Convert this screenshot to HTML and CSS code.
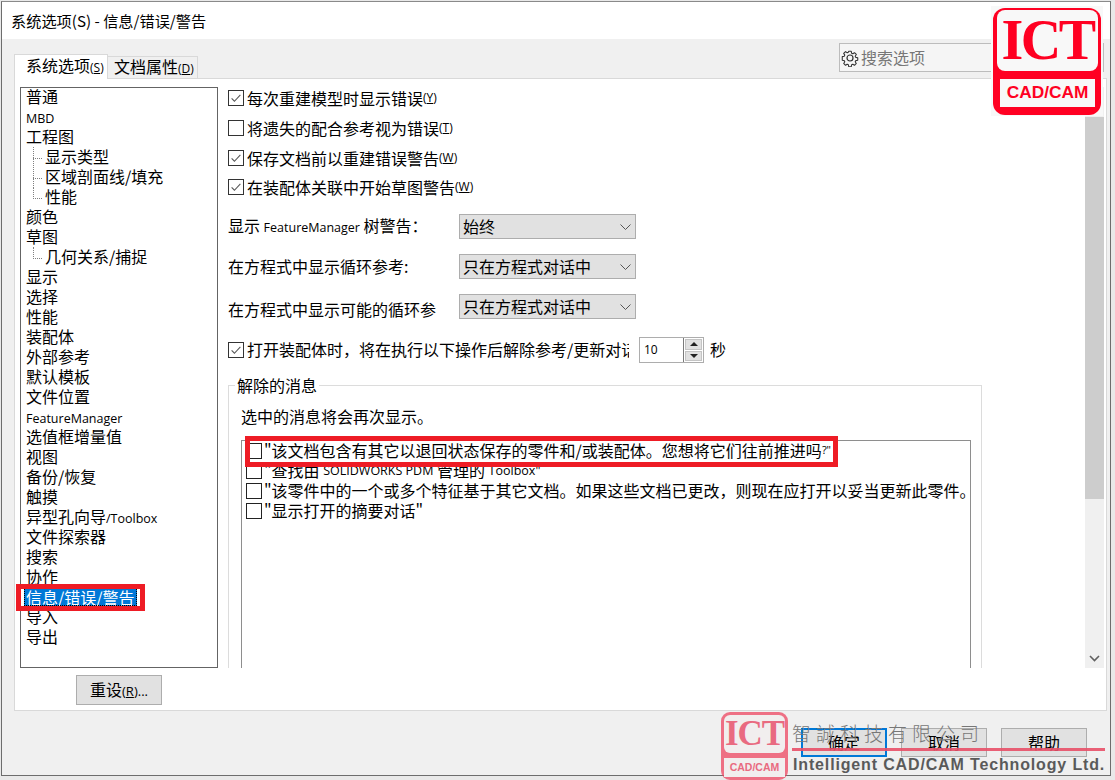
FILE: index.html
```html
<!DOCTYPE html>
<html lang="zh">
<head>
<meta charset="utf-8">
<title>系统选项</title>
<link rel="stylesheet" href="styles.css">
</head>
<body>
<div class="window">
  <div class="titlebar">系统选项(S) - 信息/错误/警告</div>
  <div class="client">
    <div class="tabstrip">
      <div class="tabs">
        <div class="tab active">系统选项<span class="acc">(<u>S</u>)</span></div>
        <div class="tab">文档属性<span class="acc">(<u>D</u>)</span></div>
      </div>
      <div class="search">
        <svg class="gear" width="18" height="18" viewBox="0 0 18 18"><path d="M7.6 1.5h2.8l.4 2.2 1.3.6 1.9-1.2 2 2-1.2 1.9.6 1.3 2.2.4v2.8l-2.2.4-.6 1.3 1.2 1.9-2 2-1.9-1.2-1.3.6-.4 2.2H7.6l-.4-2.2-1.3-.6-1.9 1.2-2-2 1.2-1.9-.6-1.3-2.2-.4V7.5l2.2-.4.6-1.3-1.2-1.9 2-2 1.9 1.2 1.3-.6z" transform="translate(.9 .9) scale(.9)" fill="none" stroke="#333" stroke-width="1.2" stroke-linejoin="round"/><circle cx="9" cy="9" r="3" fill="none" stroke="#333" stroke-width="1.2"/></svg>
        <span class="search-text">搜索选项</span>
      </div>
    </div>
    <div class="panel">
      <div class="panel-main">
        <div class="side">
          <ul class="tree">
            <li>普通</li>
            <li class="latin">MBD</li>
            <li>工程图</li>
            <li class="sub">显示类型</li>
            <li class="sub">区域剖面线/填充</li>
            <li class="sub last">性能</li>
            <li>颜色</li>
            <li>草图</li>
            <li class="sub last">几何关系/捕捉</li>
            <li>显示</li>
            <li>选择</li>
            <li>性能</li>
            <li>装配体</li>
            <li>外部参考</li>
            <li>默认模板</li>
            <li>文件位置</li>
            <li class="latin">FeatureManager</li>
            <li>选值框增量值</li>
            <li>视图</li>
            <li>备份/恢复</li>
            <li>触摸</li>
            <li>异型孔向导<span class="latin-in">/Toolbox</span></li>
            <li>文件探索器</li>
            <li>搜索</li>
            <li>协作</li>
            <li><span class="selected">信息/错误/警告</span></li>
            <li>导入</li>
            <li>导出</li>
          </ul>
          <div class="reset-wrap"><div class="btn reset">重设<span class="acc wide">(<u>R</u>)...</span></div></div>
        </div>
        <div class="pane">
          <div class="pane-content">
            <div class="checks">
              <div class="check-row"><span class="cb on"><svg viewBox="0 0 16 16"><path d="M3 8.5l3.2 3.2L13 4.5" fill="none" stroke="#555" stroke-width="1.2"/></svg></span>每次重建模型时显示错误<span class="acc">(<u>Y</u>)</span></div>
              <div class="check-row"><span class="cb"></span>将遗失的配合参考视为错误<span class="acc">(<u>T</u>)</span></div>
              <div class="check-row"><span class="cb on"><svg viewBox="0 0 16 16"><path d="M3 8.5l3.2 3.2L13 4.5" fill="none" stroke="#555" stroke-width="1.2"/></svg></span>保存文档前以重建错误警告<span class="acc">(<u>W</u>)</span></div>
              <div class="check-row"><span class="cb on"><svg viewBox="0 0 16 16"><path d="M3 8.5l3.2 3.2L13 4.5" fill="none" stroke="#555" stroke-width="1.2"/></svg></span>在装配体关联中开始草图警告<span class="acc">(<u>W</u>)</span></div>
            </div>
            <div class="selects">
              <div class="select-row"><span class="sel-label first">显示 <span class="latin-in">FeatureManager</span> 树警告：</span><div class="select">始终<svg class="chev" width="11" height="6" viewBox="0 0 11 6"><path d="M.5.5l5 5 5-5" fill="none" stroke="#555"/></svg></div></div>
              <div class="select-row"><span class="sel-label">在方程式中显示循环参考:</span><div class="select">只在方程式对话中<svg class="chev" width="11" height="6" viewBox="0 0 11 6"><path d="M.5.5l5 5 5-5" fill="none" stroke="#555"/></svg></div></div>
              <div class="select-row"><span class="sel-label low">在方程式中显示可能的循环参</span><div class="select">只在方程式对话中<svg class="chev" width="11" height="6" viewBox="0 0 11 6"><path d="M.5.5l5 5 5-5" fill="none" stroke="#555"/></svg></div></div>
            </div>
            <div class="spin-row">
              <span class="cb on"><svg viewBox="0 0 16 16"><path d="M3 8.5l3.2 3.2L13 4.5" fill="none" stroke="#555" stroke-width="1.2"/></svg></span>
              <span class="spin-label">打开装配体时，将在执行以下操作后解除参考/更新对话框</span>
              <div class="spin"><span class="spin-val">10</span><div class="spin-btns"><span class="spin-btn"><i class="up"></i></span><span class="spin-btn"><i class="down"></i></span></div></div>
              <span class="sec">秒</span>
            </div>
            <div class="group">
              <div class="legend">解除的消息</div>
              <div class="hint">选中的消息将会再次显示。</div>
              <div class="listbox">
                <div class="msg"><span class="cb"></span>"该文档包含有其它以退回状态保存的零件和/或装配体。您想将它们往前推进吗<span class="small">?"</span></div>
                <div class="msg"><span class="cb"></span>"查找由 <span class="latin-in">SOLIDWORKS PDM</span> 管理的 <span class="latin-in">Toolbox"</span></div>
                <div class="msg"><span class="cb"></span>"该零件中的一个或多个特征基于其它文档。如果这些文档已更改，则现在应打开以妥当更新此零件。</div>
                <div class="msg"><span class="cb"></span>"显示打开的摘要对话"</div>
              </div>
            </div>
          </div>
          <div class="scrollbar">
            <div class="sb-up"></div>
            <div class="sb-thumb"></div>
            <div class="sb-track"></div>
            <div class="sb-down"><svg width="11" height="7" viewBox="0 0 11 7"><path d="M1 1l4.5 4.5L10 1" fill="none" stroke="#606060" stroke-width="1.6"/></svg></div>
          </div>
        </div>
      </div>
    </div>
    <div class="footer">
      <div class="btn default">确定</div>
      <div class="btn">取消</div>
      <div class="btn">帮助</div>
    </div>
  </div>
</div>

<div class="hl hl-tree"></div>
<div class="hl hl-msg"></div>

<div class="logo">
  <div class="logo-inner">
    <div class="logo-top">ICT</div>
    <div class="logo-bottom">CAD/CAM</div>
  </div>
</div>

<div class="mark">
  <div class="mark-logo">
    <div class="mark-top">ICT</div>
    <div class="mark-bottom">CAD/CAM</div>
  </div>
  <div class="mark-text">
    <div class="mark-cn">智誠科技有限公司</div>
    <div class="mark-en">Intelligent CAD/CAM Technology Ltd.</div>
  </div>
</div>
</body>
</html>
```

FILE: styles.css
```css
* { box-sizing: border-box; }
html, body { margin: 0; height: 100%; }
body {
  position: relative;
  width: 1115px;
  height: 780px;
  overflow: hidden;
  background: #e9e9e9;
  color: #000;
  font: 16px/20px "Noto Sans CJK SC", "Open Sans", sans-serif;
}
.window {
  margin: 1px 0 0 1px;
  width: 1110px;
  height: 775px;
  border: 1px solid #6d6d6d;
  border-top-color: #8a8a8a;
  background: #f0f0f0;
  display: flex;
  flex-direction: column;
}
.titlebar {
  height: 37px;
  flex: none;
  background: #fff;
  padding: 8px 0 0 9px;
  font-size: 15.2px;
  line-height: 20px;
}
.client { flex: 1; display: flex; flex-direction: column; padding: 0 3px 0 12px; min-height: 0; }
.tabstrip { height: 39px; flex: none; display: flex; justify-content: space-between; position: relative; }
.tabs { display: flex; align-items: flex-end; padding-top: 15px; height: 40px; position: relative; z-index: 1; }
.tab {
  height: 22px;
  width: 90px;
  padding: 0 0 0 6px;
  margin-bottom: 1px;
  background: #f0f0f0;
  border: 1px solid #d9d9d9;
  border-left: 0;
  border-bottom: 0;
  line-height: 19px;
  white-space: nowrap;
}
.tab.active {
  width: 94px;
  height: 25px;
  margin-bottom: 0;
  padding-left: 11px;
  background: #fff;
  border-left: 1px solid #d9d9d9;
  line-height: 20px;
}
.acc { font: 12px/1 "Open Sans", sans-serif; }
.acc.wide { font-size: 13px; }
.search {
  position: relative;
  top: 4px;
  width: 265px;
  height: 29px;
  margin-right: 3px;
  background: #f5f5f5;
  border: 1px solid #bcbcbc;
  display: flex;
  align-items: center;
  padding-left: 1px;
  gap: 2px;
  color: #777;
}
.search-text { padding-bottom: 2px; }
.gear { flex: none; }
.panel {
  height: 633px;
  flex: none;
  background: #fff;
  border: 1px solid #d9d9d9;
  padding: 8px 2px 0 5px;
}
.panel-main { display: flex; gap: 10px; height: 622px; }
.side { width: 198px; flex: none; display: flex; flex-direction: column; }
.tree {
  list-style: none;
  margin: 0;
  padding: 0 0 0 5px;
  height: 581px;
  flex: none;
  border: 1px solid #646464;
}
.tree li { height: 20px; line-height: 16px; white-space: nowrap; position: relative; }
.tree li.latin { font: 12.5px/21px "Open Sans", sans-serif; }
.latin-in { font: 12.5px/1 "Open Sans", sans-serif; }
.tree li.sub { padding-left: 19px; }
.tree li.sub::before {
  content: "";
  position: absolute;
  left: 7px;
  top: -1px;
  height: 21px;
  border-left: 1px dotted #808080;
}
.tree li.sub.last::before { height: 12px; }
.tree li.sub::after {
  content: "";
  position: absolute;
  left: 7px;
  top: 10px;
  width: 9px;
  border-top: 1px dotted #808080;
}
.selected {
  display: block;
  width: fit-content;
  margin-left: -2px;
  padding: 0 2px;
  line-height: 18px;
  background: #0078d7;
  color: #fff;
  outline: 1px dotted #000;
  outline-offset: -1px;
}
.reset-wrap { flex: 1; padding: 7px 0 0 56px; }
.btn {
  width: 86px;
  height: 29px;
  background: #e1e1e1;
  border: 1px solid #adadad;
  text-align: center;
  line-height: 27px;
  white-space: nowrap;
}
.reset { height: 30px; line-height: 26px; }
.pane { flex: 1; display: flex; height: 581px; min-width: 0; }
.pane-content { flex: 1; min-width: 0; overflow: hidden; display: flex; flex-direction: column; }
.checks { display: flex; flex-direction: column; padding-top: 1px; gap: 10px; height: 127px; flex: none; }
.check-row { height: 20px; display: flex; align-items: center; white-space: nowrap; }
.check-row:nth-child(4) { margin-top: -1px; }
.cb {
  width: 16px;
  height: 16px;
  flex: none;
  display: inline-block;
  background: #fff;
  border: 1px solid #333;
  margin-right: 3px;
}
.cb svg { display: block; width: 14px; height: 14px; }
.selects { display: flex; flex-direction: column; gap: 15px; flex: none; }
.select-row { display: flex; height: 25px; align-items: center; }
.sel-label { width: 231px; flex: none; white-space: nowrap; padding-bottom: 2px; }
.sel-label.first { padding-bottom: 4px; }
.sel-label.low { padding: 4px 0 0; }
.select {
  width: 177px;
  height: 25px;
  background: #e1e1e1;
  border: 1px solid #adadad;
  padding: 0 0 2px 3px;
  line-height: 20px;
  display: flex;
  align-items: center;
  justify-content: space-between;
}
.chev { margin: 2px 4px 0 0; }
.spin-row { display: flex; align-items: center; height: 26px; margin-top: 18px; flex: none; }
.spin-label { width: 382px; flex: none; overflow: hidden; white-space: nowrap; margin-right: 10px; padding-bottom: 2px; }
.spin {
  width: 65px;
  height: 26px;
  border: 1px solid #adadad;
  display: flex;
  align-items: stretch;
  flex: none;
  outline: 0;
}
.spin-val { flex: 1; padding-left: 4px; font: 12px/24px "Open Sans", sans-serif; border: 1px solid #333; border-right-color: #7a7a7a; border-width: 0 1px 0 0; }
.spin-btns { width: 19px; display: flex; flex-direction: column; gap: 1px; padding: 1px; }
.spin-btn { flex: 1; background: #e1e1e1; border: 1px solid #c4c4c4; display: flex; align-items: center; justify-content: center; }
.spin-btn i { width: 0; height: 0; border-left: 4px solid transparent; border-right: 4px solid transparent; }
.spin-btn .up { border-bottom: 4px solid #222; }
.spin-btn .down { border-top: 4px solid #222; }
.sec { margin-left: 6px; padding-bottom: 3px; }
.group {
  position: relative;
  width: 754px;
  flex: 1;
  margin-top: 22px;
  border: 1px solid #dcdcdc;
  border-bottom: 0;
  padding: 21px 10px 0 12px;
  min-height: 0;
  display: flex;
  flex-direction: column;
}
.legend {
  position: absolute;
  left: 6px;
  top: -11px;
  background: #fff;
  padding: 0 2px;
  line-height: 20px;
}
.hint { height: 20px; line-height: 18px; flex: none; }
.listbox {
  margin-top: 13px;
  flex: 1;
  border: 1px solid #8e8e8e;
  border-bottom: 0;
  padding: 0 0 0 4px;
  overflow: visible;
}
.msg { height: 20px; display: flex; align-items: flex-start; white-space: pre; line-height: 18px; }
.msg .cb { margin: 2px 2px 0 0; border-color: #222; }
.small { font: 11px/18px "Open Sans", sans-serif; }
.msg .latin-in { line-height: 20px; }
.scrollbar { width: 19px; margin-left: 3px; flex: none; background: #f0f0f0; display: flex; flex-direction: column; }
.sb-up { height: 30px; flex: none; }
.sb-thumb { height: 382px; flex: none; background: #cdcdcd; }
.sb-track { flex: 1; }
.sb-down { height: 20px; flex: none; display: flex; align-items: center; justify-content: center; }
.footer { display: flex; gap: 14px; padding: 17px 0 0 787px; }
.footer .btn { line-height: 26px; }
.default { border: 2px solid #0078d7; }
.footer .default { line-height: 24px; }

/* annotations laid over the screenshot */
.hl { position: absolute; border: 5px solid #ee1c25; pointer-events: none; }
.hl-tree { left: 16px; top: 584px; width: 129px; height: 27px; }
.hl-msg { left: 245px; top: 436px; width: 593px; height: 31px; }

.logo {
  position: absolute;
  left: 991px;
  top: 6px;
  width: 112px;
  height: 110px;
  background: #f8f8f8;
  padding: 2px 2px 1px;
}
.logo-inner {
  height: 100%;
  background: #ff0022;
  border-radius: 12px;
  padding: 2px 3px 8px 4px;
  display: flex;
  flex-direction: column;
}
.logo-top {
  height: 61px;
  flex: none;
  background: #f8f8f8;
  border-radius: 8px;
  color: #ff0022;
  text-align: center;
  font: bold 56px/61px "Liberation Serif", serif;
  letter-spacing: -2.5px;
  white-space: nowrap;
  overflow: hidden;
}
.logo-bottom {
  margin: 8px 3px 0;
  flex: 1;
  background: #f8f8f8;
  color: #ff0022;
  text-align: center;
  font: bold 17.3px/27px "Liberation Sans", sans-serif;
  white-space: nowrap;
}

.mark {
  position: absolute;
  left: 721px;
  top: 712px;
  display: flex;
  gap: 4px;
  pointer-events: none;
}
.mark-logo {
  width: 67px;
  height: 68px;
  flex: none;
  background: rgba(238, 70, 96, .75);
  border-radius: 9px;
  padding: 3px;
  display: flex;
  flex-direction: column;
}
.mark-top {
  height: 38px;
  flex: none;
  background: #f1eeee;
  border-radius: 6px;
  color: #e96a80;
  text-align: center;
  font: bold 35px/37px "Liberation Serif", serif;
  letter-spacing: -1px;
}
.mark-bottom {
  margin: 5px 0 2px;
  flex: 1;
  background: #f1eeee;
  color: #e96a80;
  text-align: center;
  font: bold 10.5px/19px "Liberation Sans", sans-serif;
}
.mark-text { width: 320px; }
.mark-cn {
  margin-top: 9px;
  height: 30px;
  width: 313px;
  border-bottom: 3px solid rgba(232, 80, 104, .9);
  color: #777;
  font: 300 19px/23px "Noto Sans CJK TC", sans-serif;
  letter-spacing: 5px;
  white-space: nowrap;
}
.mark-en {
  margin: 4px 0 0 1px;
  color: #5a5a5a;
  font: bold 16px/20px "Liberation Sans", sans-serif;
  letter-spacing: .85px;
  white-space: nowrap;
}
```
